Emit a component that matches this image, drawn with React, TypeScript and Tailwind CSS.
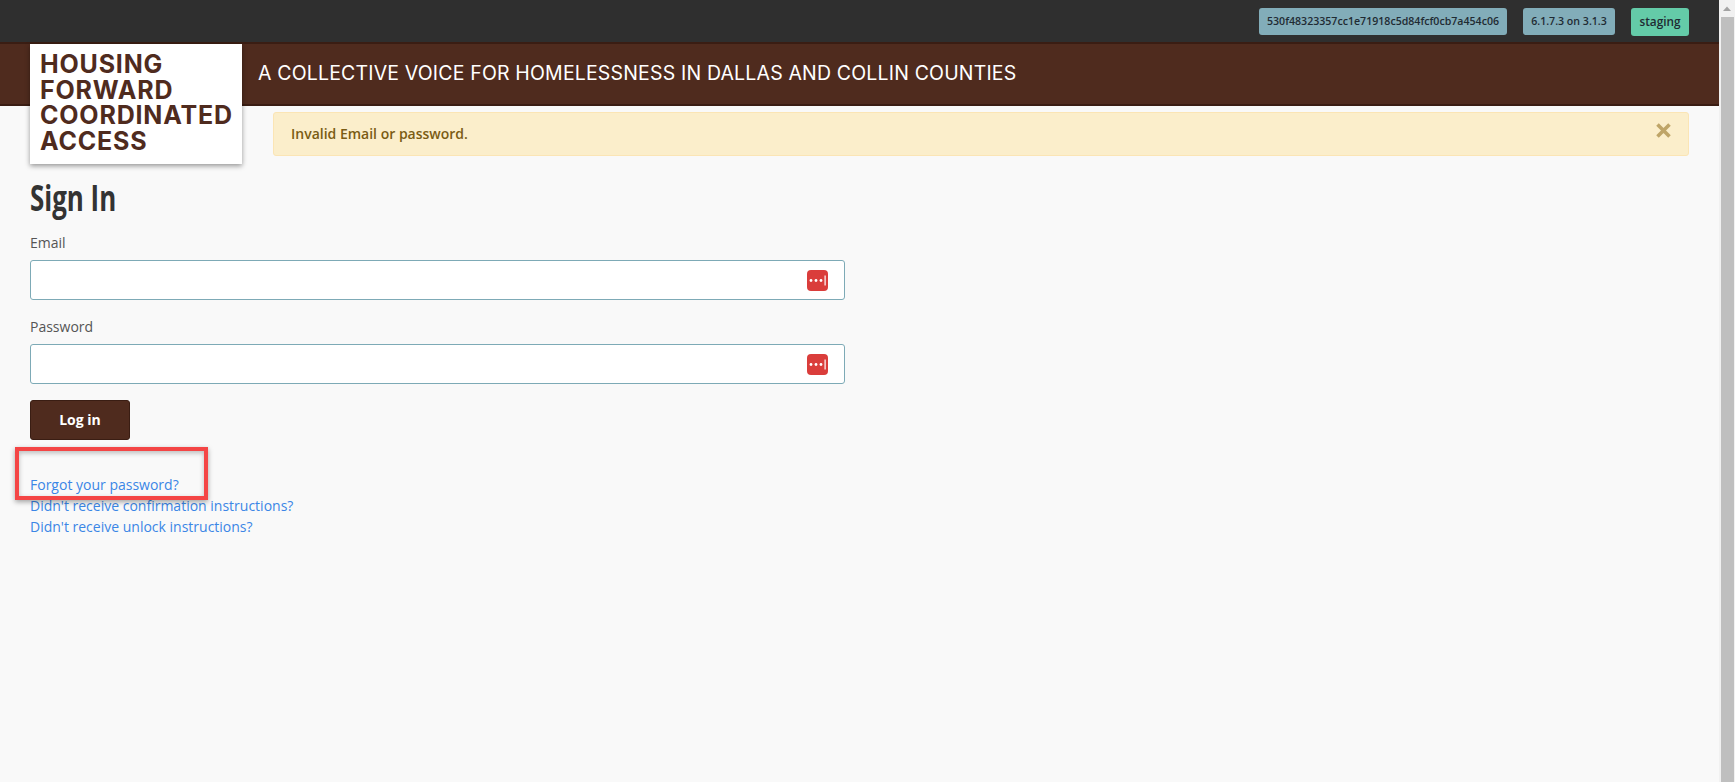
import React from "react";

function KeyIcon() {
  return (
    <svg width="21" height="21" viewBox="0 0 21 21" className="absolute right-[16px] top-[9px]">
      <rect x="0" y="0" width="21" height="21" rx="4" fill="#da3d3b" />
      <circle cx="4" cy="10.5" r="1.4" fill="#fff" />
      <circle cx="9" cy="10.5" r="1.4" fill="#fff" />
      <circle cx="14" cy="10.5" r="1.4" fill="#fff" />
      <rect x="17.5" y="5.5" width="1.2" height="10" fill="#fff" />
    </svg>
  );
}

function Field({ label }: { label: string }) {
  return (
    <div className="mb-[16px]">
      <label className="block text-[14px] leading-[21px] text-[#555555] mb-[7px]">{label}</label>
      <div className="relative w-[815px] h-[40px] bg-white border border-[#7daab6] rounded-[3px]">
        <KeyIcon />
      </div>
    </div>
  );
}

export default function App() {
  return (
    <div className="flex h-screen overflow-hidden bg-[#f9f9f9] font-['Open_Sans',sans-serif]">
      <div className="flex-1 min-w-0">
        <div className="h-[42px] bg-[#2f2f2f] flex justify-end items-start pt-[8px] pr-[30px] gap-[16px] text-[10.6px] font-semibold text-[#1f2b33]">
          <span className="h-[27px] w-[248px] rounded-[3px] bg-[#82adb9] flex items-center justify-center">530f48323357cc1e71918c5d84fcf0cb7a454c06</span>
          <span className="h-[27px] w-[92px] rounded-[3px] bg-[#82adb9] flex items-center justify-center">6.1.7.3 on 3.1.3</span>
          <span className="h-[28px] w-[58px] rounded-[3px] bg-[#64cba8] flex items-center justify-center text-[11.8px]">staging</span>
        </div>
        <div className="h-[64px] bg-[#4f2b1e] border-y-2 border-[#3a1d13] flex items-center pl-[30px]">
          <div className="relative z-10 self-start w-[212px] h-[120px] shrink-0 bg-white shadow-[0_2px_5px_rgba(0,0,0,0.4)] pl-[10px] pt-[8px] font-['Inter',sans-serif] font-bold text-[25px] leading-[25.6px] tracking-[0.8px] text-[#4f2b1e]">
            HOUSING<br />FORWARD<br />COORDINATED<br />ACCESS
          </div>
          <div className="ml-[16px] font-['Inter',sans-serif] text-[19.5px] tracking-[0.17px] text-white whitespace-nowrap">
            A COLLECTIVE VOICE FOR HOMELESSNESS IN DALLAS AND COLLIN COUNTIES
          </div>
        </div>
        <div className="px-[30px] pt-[6px] relative">
          <div className="ml-[243px] h-[44px] rounded-[3px] bg-[#fbeecb] border border-[#fbe5b5] flex items-center justify-between pl-[17px] pr-[17px] pb-[2px] text-[14px] font-semibold text-[#7a5c14]">
            <span>Invalid Email or password.</span>
            <svg width="15" height="15" viewBox="0 0 15 15" className="-mt-[6px]">
              <path d="M1.5 1.5 L13.5 13.5 M13.5 1.5 L1.5 13.5" stroke="#bfa568" strokeWidth="3.6" />
            </svg>
          </div>
          <h1 className="mt-[20px] mb-[12px] h-[44px] font-bold text-[35px] leading-[44px] text-[#333333]">
            <span className="inline-block origin-left scale-x-[0.74]">Sign In</span>
          </h1>
          <Field label="Email" />
          <Field label="Password" />
          <button className="block w-[100px] h-[40px] rounded-[3px] bg-[#4f2b1e] border border-[#3a1d13] text-white font-bold text-[14px] pb-[2px]">Log in</button>
          <div className="mt-[34px] text-[14px] leading-[21px] text-[#3b86e6]">
            <div>Forgot your password?</div>
            <div>Didn't receive confirmation instructions?</div>
            <div>Didn't receive unlock instructions?</div>
          </div>
          <div className="absolute left-[15px] top-[341px] w-[193px] h-[53px] border-[4px] border-[#f44545] shadow-[0_2px_5px_rgba(0,0,0,0.35),inset_0_2px_5px_rgba(0,0,0,0.25)]" />
        </div>
      </div>
      <div className="w-[16px] shrink-0 bg-[#f1f1f1] flex flex-col">
        <svg width="16" height="17" viewBox="0 0 16 17" className="shrink-0"><path d="M8 6.5 L12 11 L4 11 Z" fill="#a3a3a3" /></svg>
        <div className="w-[13px] ml-[2px] flex-1 bg-[#bfbfbf]" />
      </div>
    </div>
  );
}
